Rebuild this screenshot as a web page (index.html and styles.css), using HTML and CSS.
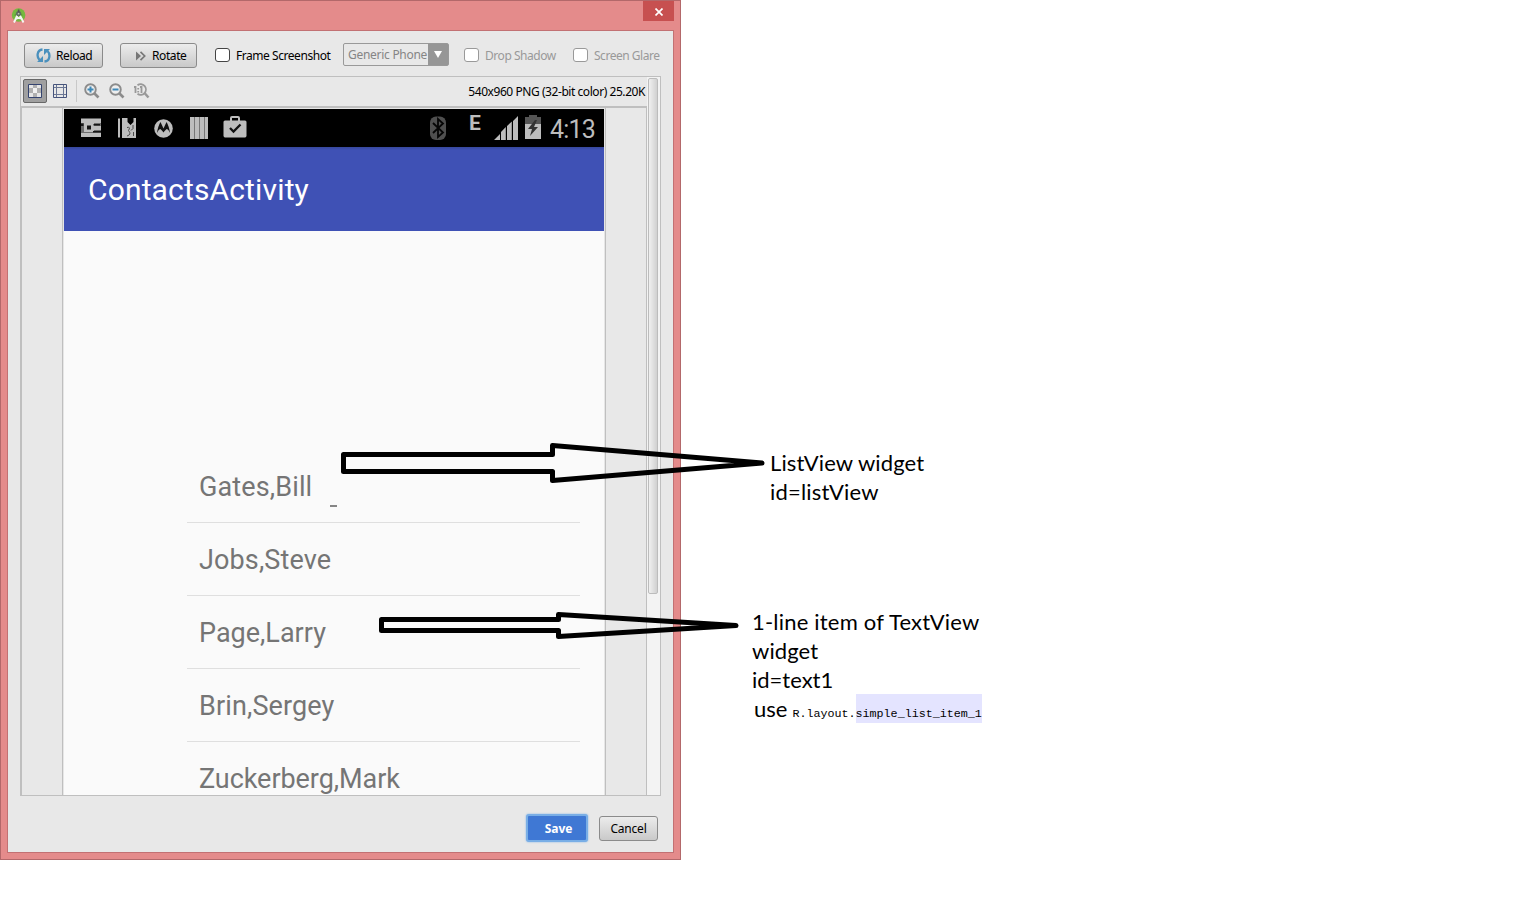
FILE: index.html
```html
<!DOCTYPE html>
<html lang="en">
<head>
<meta charset="utf-8">
<title>Screenshot</title>
<link rel="stylesheet" href="styles.css">
</head>
<body>
<main class="canvas">
  <section class="window">
    <header class="titlebar">
      <svg class="app-icon" width="16" height="16" viewBox="0 0 16 16">
        <circle cx="7.600" cy="7" r="6.800" fill="#76b83f"/>
        <path d="M3 7.500a5 5 0 0 1 9 0z" fill="#5f9a3c"/>
        <path d="M6.500 7L3 14.500M8.700 7l3.800 7.500M4 11.500c2.500-2 5-2 7.500 0" fill="none" stroke="#f4f7f2" stroke-width="1.900"/>
        <circle cx="7.600" cy="5.500" r="2.600" fill="#60705f"/>
        <path d="M7.600 1.500v4" stroke="#555" stroke-width="1.600"/>
        <circle cx="7.600" cy="5.700" r=".9" fill="#b9c4b5"/>
      </svg>
      <button class="close" aria-label="Close"><svg width="8" height="8" viewBox="0 0 8 8"><path d="M.5.500l7 7M7.500.500l-7 7" stroke="#fff" stroke-width="1.700"/></svg></button>
    </header>
    <div class="dialog">
      <div class="controls">
        <button class="btn reload">
          <svg width="15" height="15" viewBox="0 0 15 15"><path d="M6.500 1.500C.8 2 .5 9 3.500 12M8.500 13.500c5.700-.5 6-7.500 3-10.500" fill="none" stroke="#4a90bd" stroke-width="2.300"/><path d="M1 14h6V8zM14 1H8v6z" fill="#4a90bd"/></svg>
          <span>Reload</span>
        </button>
        <button class="btn rotate">
          <svg width="11" height="10" viewBox="0 0 11 10"><path d="M1 .5L6 5 1 9.500z" fill="#777"/><path d="M5.500.800L9.700 5 5.500 9.200" fill="none" stroke="#777" stroke-width="1.700"/></svg>
          <span>Rotate</span>
        </button>
        <label class="check frame"><i class="box"></i><span>Frame Screenshot</span></label>
        <div class="combo"><span>Generic Phone</span><b><svg width="8" height="7" viewBox="0 0 8 7"><path d="M0 0h8L4 7z" fill="#fff"/></svg></b></div>
        <label class="check off shadow"><i class="box"></i><span>Drop Shadow</span></label>
        <label class="check off glare"><i class="box"></i><span>Screen Glare</span></label>
      </div>
      <div class="panel">
        <div class="viewer">
          <div class="tools">
            <span class="tool active"><svg width="14" height="14" viewBox="0 0 14 14"><path d="M.5.500h13v13H.5z" fill="#e6e6e6" stroke="#34436f"/><path d="M5 1h4v3H5zM1 4h4v5H1zM9 4h4v5H9zM5 9h4v4H5z" fill="#b0b0b0"/><path d="M5 4h4v5H5z" fill="#f2f2f2"/></svg></span>
            <span class="tool"><svg width="14" height="14" viewBox="0 0 14 14"><path d="M3.500 0v14M10.500 0v14M0 3.500h14M0 10.500h14" stroke="#6a7694" fill="none"/><path d="M.5.500h13v13H.5z" fill="none" stroke="#46547c"/></svg></span>
            <span class="sep"></span>
            <svg class="zoom" width="16" height="16" viewBox="0 0 16 16"><path d="M10 10l4.500 4.500" stroke="#8c8c8c" stroke-width="2.700"/><circle cx="6.500" cy="6.500" r="5.300" fill="#eee" stroke="#8c8c8c" stroke-width="1.900"/><path d="M3.500 6.500h6M6.500 3.500v6" stroke="#3e89b8" stroke-width="2"/></svg>
            <svg class="zoom" width="16" height="16" viewBox="0 0 16 16"><path d="M10 10l4.500 4.500" stroke="#8c8c8c" stroke-width="2.700"/><circle cx="6.500" cy="6.500" r="5.300" fill="#eee" stroke="#8c8c8c" stroke-width="1.900"/><path d="M3.500 6.500h6" stroke="#3e89b8" stroke-width="2"/></svg>
            <svg class="zoom" width="16" height="16" viewBox="0 0 16 16"><path d="M10.500 10l4 4.500" stroke="#999" stroke-width="2.500"/><path d="M3.500 2.200A5.300 5.300 0 1 1 3.500 10.800" fill="none" stroke="#999" stroke-width="1.800"/><path d="M0 4h1.500v6M6 4h1.500v6M4.200 5v1.500M4.200 8v1.500" fill="none" stroke="#999" stroke-width="1.800"/></svg>
            <span class="info">540x960 PNG (32-bit color) 25.20K</span>
          </div>
          <div class="stage">
            <div class="phone">
              <div class="status">
                <svg width="540" height="38" viewBox="0 0 540 38">
                  <g fill="#bdbdbd">
                    <path d="M17 9.500h20v5H17zM17 23.500h20V28H17z"/><path d="M17 14h20v10H17z" fill="#6d6d6d"/><path d="M20 14h10v9H20z"/><path d="M30 17h7v4h-7z"/>
                    <path d="M23 16.500h4v4h-4zM17 14.500h2.500V17H17zM29.500 15H36v1.500h-6.500zM29 22h8v1.500h-8z" fill="#151515"/>
                    <path d="M54 9.500h2v19h-2zM58 9h4v20h-4z"/><path d="M61 9h2.500v4l3 3 3-3V9H72v20H60z"/>
                    <path d="M63 18.500q4-1 1.500 3 3.500 4-1.500 5.500M69 16v3.500l-2 2M69.500 23v4" fill="none" stroke="#4a4a4a"/>
                    <circle cx="99.500" cy="19.500" r="9.300"/>
                    <path d="M93 24q1-7 3.500-11l3 6.500 3-6.500q2.500 4 3.500 11-1.500-3.500-3-4-1 0-3.500 3.500Q97 20 96 20q-1.500.5-3 4z" fill="#111"/>
                    <path d="M126 8h18v22h-18z"/>
                    <path d="M130.500 8v22M135.500 8v22M140.500 8v22" stroke="#777"/>
                    <path d="M161 11.500h20q1.500 0 1.500 1.500v13.500q0 2-1.500 2h-20q-1.500 0-1.500-2V13q0-1.500 1.500-1.500z"/>
                    <path d="M167 12V9q0-1 1-1h6q1 0 1 1v3" fill="none" stroke="#bdbdbd" stroke-width="2"/>
                    <path d="M166 19l3.500 3.500 7-7" fill="none" stroke="#111" stroke-width="2.300"/>
                    <rect x="366" y="7.500" width="16" height="23.500" rx="6" fill="#4f4f4f"/>
                    <path d="M369 14l10 9.500-5 4.500V10l5 4.500L369 24" fill="none" stroke="#050505" stroke-width="1.800"/>
                    <path d="M430 31h6v-6zM437 31h4.800V18l-4.800 5zM443 31h4.800V12.500L443 17zM449 31h5V7l-5 5z"/>
                    <path d="M461 8h4V6h8v2h4v7h-16z" fill="#555"/><path d="M461 15h16v15h-16z"/>
                    <path d="M471 11l-7 9h4l-2 7 8-9h-4l3-7z" fill="#333"/>
                  </g>
                </svg>
                <span class="edge-mark">E</span><span class="clock">4:13</span>
              </div>
              <div class="appbar"><span>ContactsActivity</span></div>
              <ul class="contacts">
                <li><span class="n1">Gates,Bill</span><i class="dash"></i></li>
                <li><span class="n2">Jobs,Steve</span></li>
                <li><span class="n3">Page,Larry</span></li>
                <li><span class="n4">Brin,Sergey</span></li>
                <li><span class="n5">Zuckerberg,Mark</span></li>
              </ul>
            </div>
          </div>
        </div>
        <div class="scroll"><div class="thumb"></div></div>
      </div>
      <footer class="actions"><button class="btn save"><span>Save</span></button><button class="btn cancel"><span>Cancel</span></button></footer>
    </div>
  </section>
  <svg class="arrows" width="1520" height="900" viewBox="0 0 1520 900">
    <path d="M552.500 454.500H343.500v17H552.500v9L762 463 552.500 445.500z"/>
    <path d="M558.500 619.500H381.500v11H558.500v6L736 625.500 558.500 614.500z"/>
  </svg>
  <aside class="note note-list"><span class="w1">ListView widget</span><br><span class="w2">id=listView</span></aside>
  <aside class="note note-item"><span class="w3">1-line item of TextView</span><br><span class="w4">widget</span><br><span class="w5">id=text1</span>
    <div class="use"><span class="w6">use</span><code>R.layout.</code><code class="mark">simple_list_item_1</code></div>
  </aside>
</main>
</body>
</html>
```
FILE: styles.css
```css
* { box-sizing: border-box; }
body { margin: 0; background: #fff; font: 12px "Noto Sans", "Open Sans", sans-serif; color: #000; }
button { font: inherit; padding: 0; color: inherit; }
svg { display: block; flex: none; }
span { white-space: nowrap; }
.canvas { position: relative; width: 1520px; height: 900px; overflow: hidden; }
.window { width: 681px; height: 860px; border: 1px solid #b3686a; background: #e48b8b; padding: 0 6px 6px; display: flex; flex-direction: column; }
.titlebar { height: 29px; display: flex; justify-content: space-between; flex: none; }
.app-icon { margin: 7px 0 0 4px; }
.close { width: 31px; height: 20px; background: #c75050; border: 0; display: grid; place-items: center; padding-top: 1px; }
.dialog { flex: 1; border: 1px solid #c27173; background: #e8e8e8; padding: 12px 12px 0; }
.controls { display: flex; align-items: flex-start; height: 33px; padding-left: 4px; }
.controls > * { flex: none; }
.btn { height: 25px; border: 1px solid #8b8b8b; border-radius: 3px; background: linear-gradient(#ececec, #c9c9c9); display: flex; align-items: center; }
.reload { width: 79px; padding-left: 11px; gap: 5px; }
.reload span { letter-spacing: -.4px; }
.rotate { width: 77px; margin-left: 17px; padding-left: 14px; gap: 6px; }
.rotate span { letter-spacing: -.4px; }
.check { display: flex; align-items: center; gap: 6px; height: 24px; }
.box { flex: none; width: 15px; height: 14px; border: 1px solid #444; border-radius: 3px; background: #fff; }
.off { color: #999; }
.off .box { border-color: #999; }
.frame { margin-left: 18px; width: 128px; letter-spacing: -.45px; }
.combo { width: 106px; height: 23px; display: flex; border: 1px solid #999; border-radius: 2px; color: #858585; line-height: 22px; padding-left: 4px; letter-spacing: -.28px; justify-content: space-between; }
.combo b { width: 20px; background: #969696; display: grid; place-items: center; }
.shadow { margin-left: 15px; width: 109px; letter-spacing: -.45px; }
.glare { letter-spacing: -.47px; }
.panel { width: 641px; height: 720px; border: 1px solid #bfbfbf; display: flex; }
.viewer { width: 626px; display: flex; flex-direction: column; }
.tools { height: 29px; display: flex; align-items: center; padding: 0 0 1px 2px; }
.tool { width: 24px; height: 24px; display: grid; place-items: center; border: 1px solid transparent; }
.tool + .tool { margin-left: 1px; }
.active { border-color: #686868; border-radius: 2px; background: #a0a0a0; }
.sep { width: 1px; height: 22px; background: #c8c8c8; margin: 0 7px 0 4px; }
.zoom { margin-right: 9px; }
.info { margin-left: auto; letter-spacing: -.44px; padding-right: 2px; }
.stage { flex: 1; min-height: 0; border: 1px solid #bfbfbf; border-top-width: 2px; border-bottom: 0; padding-left: 40px; overflow: hidden; }
.phone { width: 544px; height: 100%; border: solid #bfbfbf; border-width: 0 1px; padding: 1px 1px 0; background: #e6e6e6; overflow: hidden; }
.status { position: relative; width: 540px; height: 38px; background: #000; }
.edge-mark, .clock { position: absolute; color: #bdbdbd; line-height: 1; }
.edge-mark { left: 405px; top: 4px; font: bold 21px/1 Roboto, sans-serif; }
.clock { left: 486px; top: 8px; font: 25px/1 Roboto, sans-serif; letter-spacing: -.8px; }
.appbar { width: 540px; height: 84px; background: linear-gradient(#37479c, #3f51b5 3px); color: #fff; font: 30px/86px Roboto, sans-serif; letter-spacing: .15px; padding-left: 24px; }
.contacts { width: 540px; height: 575px; margin: 0; padding: 219px 24px 0 123px; background: #fafafa; list-style: none; color: #757575; font: 27px/75px Roboto, sans-serif; overflow: hidden; }
.contacts li { height: 73px; border-bottom: 1px solid #dfdfdf; padding-left: 12px; display: flex; }
.n1, .n2, .n4 { letter-spacing: .13px; }
.n5 { letter-spacing: -.06px; }
.dash { width: 7px; height: 2px; background: #858585; margin: 55px 0 0 18px; }
.scroll { flex: 1; background: #f3f3f3; padding: 1px 1px 0; }
.thumb { width: 10px; height: 516px; border: 1px solid #bcbcbc; border-radius: 2px; background: linear-gradient(90deg, #f0f0f0, #d0d0d0); }
.actions { display: flex; padding: 18px 3px 0 506px; align-items: center; gap: 11px; }
.save { width: 62px; height: 28px; border: 2px solid #79aee6; background: #3f78d4; color: #fff; font-weight: bold; justify-content: center; box-shadow: 0 0 2px #79aee6; padding-left: 3px; letter-spacing: -.1px; }
.cancel { width: 59px; justify-content: center; letter-spacing: -.2px; }
.arrows { position: absolute; left: 0; top: 0; fill: none; stroke: #000; stroke-width: 5; stroke-linejoin: round; pointer-events: none; }
.note { position: absolute; font: 22px/29px Lato, sans-serif; }
.note-list { left: 770px; top: 448px; }
.note-item { left: 752px; top: 607px; }
.w1 { letter-spacing: .1px; }
.w2, .w3 { letter-spacing: .2px; }
.w4 { letter-spacing: .1px; }
.use { display: flex; align-items: stretch; padding-left: 2px; height: 29px; }
.use code { font: 11.700px/40px "Liberation Mono", monospace; letter-spacing: 0; }
.w6 { margin-right: 5px; }
.mark { background: #e4e4ff; }
```
